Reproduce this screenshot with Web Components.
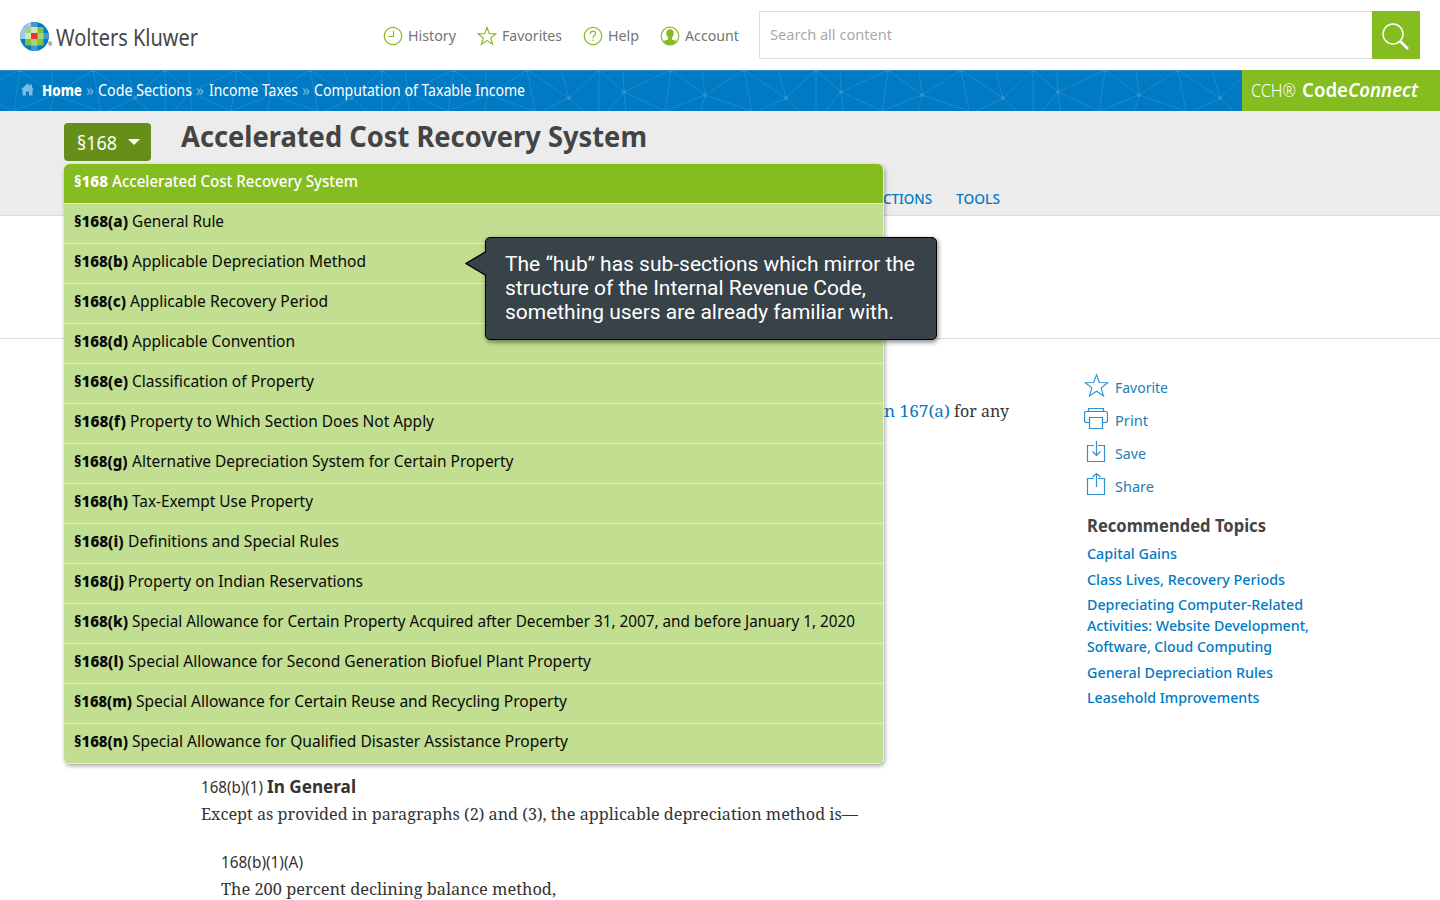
<!DOCTYPE html>
<html lang="en">
<head>
<meta charset="utf-8">
<title>CCH CodeConnect</title>
<style>
html,body{margin:0;padding:0;background:#fff;overflow:hidden;height:900px}
body{font-family:"Noto Sans","Open Sans",sans-serif;font-size:15.5px;color:#333}
</style>
</head>
<body>
<code-page></code-page>
<script>
const make=(name,html,after)=>customElements.define(name,class extends HTMLElement{
  constructor(){super();this.attachShadow({mode:"open"});}
  connectedCallback(){
    this.shadowRoot.innerHTML=typeof html==="function"?html(this):html;
    if(after)after(this);
  }
});

const STAR='<path d="M10 1.4 12.3 7.6 19 7.8 13.7 11.9 15.6 18.3 10 14.6 4.4 18.3 6.3 11.9 1 7.8 7.7 7.6Z"/>';
const ICONS={
  history:['0 0 20 20',20,'<circle cx="10" cy="10" r="8.7"/><path d="M10.5 4.7V10.5H5.5"/>'],
  star:['0 0 20 20',20,STAR],
  help:['0 0 20 20',20,'<circle cx="10" cy="10" r="8.7"/><path d="M7.4 7.7C7.4 4.3 12.7 4.3 12.7 7.5 12.7 9.5 10 9.5 10 12"/><path d="M10 13.4V15"/>'],
  account:['0 0 20 20',20,'<circle cx="10" cy="10" r="8.8"/><path fill="currentColor" stroke="none" d="M10 3.2C12.8 3.2 14 5 13.7 7.8 13.5 9.6 12.8 10.8 12 11.6V13.2C12.6 14.3 15.6 14.3 17 15.4A9 9 0 0 1 3 15.4C4.4 14.3 7.4 14.3 8 13.2V11.6C7.2 10.8 6.5 9.6 6.3 7.8 6 5 7.2 3.2 10 3.2Z"/>'],
  favorite:['0 0 20 20',25,STAR],
  print:['0 0 24 24',24,'<path d="M4.5 4.5V1.5H19.500V4.500M5.500 15.500H2.500Q.5 15.500 .5 13.500V6.500Q.5 4.500 2.500 4.500H21.500Q23.500 4.500 23.500 6.500V13.500Q23.500 15.500 21.500 15.500H18.500M5.500 10.500H18.500V21.500H5.500Z"/>'],
  save:['0 0 24 24',24,'<path d="M10 5.500H3.500V21.500H20.500V5.500H14M12.500 1V15M8.500 11.500 12.500 15.500 16.500 11.500"/>'],
  share:['0 0 24 24',24,'<path d="M10 5.500H3.500V21.500H20.500V5.500H14M12.500 14V0.500M8.500 4 12.500 0.500 16.500 4"/>']
};
make("line-icon",el=>{const[v,s,p]=ICONS[el.getAttribute("name")];return `<style>:host{display:block;width:${s}px;height:${s}px;flex:none}svg{display:block}</style>
<svg width="${s}" height="${s}" viewBox="${v}" fill="none" stroke="currentColor" stroke-width="${s===25?.9:1.2}">${p}</svg>`});

make("brand-logo",`<style>:host{display:flex;align-items:center;width:363px;height:70px;padding-left:20px;box-sizing:border-box;flex:none;color:#474747;font-size:23.200px}
svg{flex:none;margin-top:2px}.r{font-size:5px;margin:18px 3px 0 -1px;width:5px;font-weight:700}fit-text{padding-top:3px}</style>
<svg width="29" height="29" viewBox="0 0 29 29"><defs><clipPath id="c"><circle cx="14.500" cy="14.500" r="14.400"/></clipPath></defs>
<g clip-path="url(#c)"><path fill="#007ac3" d="M0 0H29V29H0Z"/><path fill="#a5c9eb" d="M5 0H11V5H5ZM0 5H5V17H0Z"/><path fill="#409bd2" d="M11 0H17.500V5H11ZM23.500 11H29V17H23.500ZM11 23.500H17.500V29H11Z"/>
<path fill="#7fc241" d="M5 5H23.500V23.500H5Z"/><path fill="#a6d178" d="M5 5H11V11H5ZM17.500 11H23.500V17H17.500ZM11 17H17.500V23.500H11Z"/><path fill="#cfe6b4" d="M11 5H17.500V11H11ZM5 11H11V17H5Z"/><path fill="#ee3338" d="M11 11H17.500V17H11Z"/></g></svg>
<span class="r">®</span><fit-text w="142">Wolters Kluwer</fit-text>`);

make("nav-item",el=>`<style>:host{display:flex;align-items:center;color:#757575;font-size:15px;height:24px}line-icon{color:#85bc20;margin-right:5px}fit-text{margin-top:-1px}</style>
<line-icon name="${el.getAttribute("icon")}"></line-icon><fit-text w="${el.getAttribute("w")}"><slot></slot></fit-text>`);

make("search-box",`<style>:host{display:flex;width:661px;height:48px;flex:none}.f{flex:1;border:1px solid #dcdcdc;border-right:0;display:flex;align-items:center;padding:0 0 2px 10px;color:#a9a9a9;font-size:15px;box-sizing:border-box}.b{width:48px;background:#85bc20;display:flex}</style>
<div class="f"><fit-text w="122">Search all content</fit-text></div>
<div class="b"><svg width="48" height="48" fill="none" stroke="#fff"><circle cx="21" cy="23" r="10" stroke-width="1.500"/><path d="M28.500 30.500 36 38" stroke-width="2.600"/></svg></div>`);

make("site-header",`<style>:host{display:flex;height:70px;align-items:center;background:#fff}nav{display:flex;width:376px;margin-left:20px;padding-top:1px;gap:21px;flex:none}</style>
<brand-logo></brand-logo><nav><nav-item icon="history" w="48">History</nav-item><nav-item icon="star" w="60">Favorites</nav-item><nav-item icon="help" w="31">Help</nav-item><nav-item icon="account" w="54">Account</nav-item></nav><search-box></search-box>`);

make("crumb-bar",`<style>:host{display:grid;grid-template-columns:1242px 198px;height:41px;background:#007ac3;color:#fff}
.l{display:grid}.l>*{grid-area:1/1}.t{display:flex;height:39px;align-items:center;padding-left:21px;gap:4px}.h{margin-right:4px}
b{font-weight:800}.s{color:#7dbbe0}.p{background:#85bc20;display:flex;align-items:center;padding:0 0 1px 9px;gap:6px;font-size:19px;box-sizing:border-box;height:41px}</style>
<div class="l"><svg width="1242" height="41"><defs><pattern id="n" patternUnits="userSpaceOnUse" x="-82" y="0" width="217" height="41">
<g stroke="#258bcb" stroke-width=".8" fill="none"><path d="M0 28 30 0V41M0 28-42 0M0 28-8 0M0 28-27 41M0 28 14 41M30 0 55 22 54 0M55 22 102 0 96 41 55 22 57 41M55 22 39 41M102 0 136 25 133 0M136 25 175 0 183 41 136 25 96 41M136 25 132 41M175 0 217 28 190 41M217 28 209 0M217 28 231 0"/></g>
<g fill="#3090cc"><circle cx="0" cy="28" r="2"/><circle cx="217" cy="28" r="2"/><circle cx="55" cy="22" r="2"/><circle cx="136" cy="25" r="2"/><circle cx="30" cy="0" r="2.200"/><circle cx="102" cy="0" r="2.200"/><circle cx="175" cy="0" r="2.200"/></g></pattern></defs><path fill="url(#n)" d="M0 0H1242V41H0Z"/><path stroke="#2c8dca" d="M0 .5H1242"/></svg>
<div class="t"><svg class="h" width="13" height="13" viewBox="0 0 13 13" fill="#7dbbe0"><path d="M6.500 .5 9 2.800V1.500H11V4.600L13 6.500H11.500V12.500H8V8.500H5V12.500H1.500V6.500H0Z"/></svg>
<fit-text w="40"><b>Home</b></fit-text><fit-text class="s" w="8">»</fit-text><fit-text w="94">Code Sections</fit-text><fit-text class="s" w="8" style="margin-right:1px">»</fit-text><fit-text w="89">Income Taxes</fit-text><fit-text class="s" w="8">»</fit-text><fit-text w="211">Computation of Taxable Income</fit-text></div></div>
<div class="p"><fit-text w="45" style="font-weight:300">CCH®</fit-text><fit-text w="116" style="font-weight:600">Code<i>Connect</i></fit-text></div>`);

make("section-button",`<style>:host{display:flex;width:87px;height:38px;box-sizing:border-box;padding-left:13px;align-items:center;background:#658f18;border-radius:4px;color:#fff;font-size:20px;gap:11px}svg{display:block;margin-top:-1px}</style>
<fit-text w="40"><slot></slot></fit-text><svg width="12" height="6"><path fill="#fff" d="M0 0H12L6 6Z"/></svg>`);

make("title-band",`<style>:host{display:block;height:105px;background:#ececec;border-bottom:1px solid #dcdcdc;box-sizing:border-box;color:#444}
.a{display:flex;padding:12px 0 0 64px;gap:30px;height:52px;box-sizing:border-box}h1{margin:-8px 0 0;font-size:29px;line-height:42px;font-weight:700}
.b{display:flex;padding:23px 0 0 882.500px;gap:24px;color:#007ac3;line-height:24px;font-size:15px;font-weight:500}</style>
<div class="a"><section-button>§168</section-button><h1><fit-text w="466">Accelerated Cost Recovery System</fit-text></h1></div>
<div class="b"><fit-text w="49">CTIONS</fit-text><fit-text w="44">TOOLS</fit-text></div>`);

make("menu-row",el=>`<style>:host{display:flex;height:40px;box-sizing:border-box;border-bottom:1px solid #e3efd0;padding:0 0 6px 10px;align-items:center;gap:4px;background:#c2de91;color:#0a0a0a;font-weight:450}
:host([on]){background:#85bc20;color:#fff;font-weight:500}b{font-weight:800}</style>
<fit-text w="${el.getAttribute("a")}"><b>§168${el.getAttribute("k")}</b></fit-text><fit-text w="${el.getAttribute("b")}"><slot></slot></fit-text>`);

const ROWS=[["",34,246,"Accelerated Cost Recovery System"],["(a)",54,92,"General Rule"],["(b)",54,234,"Applicable Depreciation Method"],["(c)",52,198,"Applicable Recovery Period"],["(d)",54,163,"Applicable Convention"],["(e)",54,182,"Classification of Property"],["(f)",52,304,"Property to Which Section Does Not Apply"],["(g)",53.500,381.500,"Alternative Depreciation System for Certain Property"],["(h)",54,181,"Tax-Exempt Use Property"],["(i)",49.500,211,"Definitions and Special Rules"],["(j)",50,235,"Property on Indian Reservations"],["(k)",54,723,"Special Allowance for Certain Property Acquired after December 31, 2007, and before January 1, 2020"],["(l)",49.500,463,"Special Allowance for Second Generation Biofuel Plant Property"],["(m)",58,431,"Special Allowance for Certain Reuse and Recycling Property"],["(n)",54,436,"Special Allowance for Qualified Disaster Assistance Property"]];
make("section-menu",`<style>:host{display:block;width:820px;box-sizing:border-box;border-radius:6px;overflow:hidden;border-right:1px solid #e3efd0;box-shadow:1px 2px 4px rgba(0,0,0,.35)}</style>`+ROWS.map(([k,a,b,t],i)=>`<menu-row k="${k}" a="${a}" b="${b}"${i?"":" on"}>${t}</menu-row>`).join(""));

make("hub-tip",`<style>:host{display:block;width:452px;height:103px;box-sizing:border-box;background:#384249;border:1px solid #000;border-radius:5px;box-shadow:1px 2px 5px rgba(0,0,0,.5);padding:14px 0 0 19px;color:#fff;font:400 20px/24px Roboto,sans-serif}
svg{position:absolute;left:-21px;top:12px}fit-text{display:block}</style>
<svg width="22" height="27"><path fill="#384249" d="M22 1 1 13.500 22 26Z"/><path fill="none" stroke="#000" stroke-width="1.300" d="M21 1.500 1 13.500 21 25.500"/></svg>
<fit-text w="410">The “hub” has sub-sections which mirror the</fit-text><fit-text w="361">structure of the Internal Revenue Code,</fit-text><fit-text w="389">something users are already familiar with.</fit-text>`);

make("tool-link",el=>`<style>:host{display:flex;height:33px;align-items:center;color:#1b7db8;font-size:15px;font-weight:400}.i{width:31px;color:#2b91d0;flex:none}fit-text{padding-top:2px}</style>
<div class="i"><line-icon name="${el.getAttribute("icon")}"></line-icon></div><fit-text w="${el.getAttribute("w")}"><slot></slot></fit-text>`);

make("side-panel",`<style>:host{display:block;padding:30px 0 0 1px;color:#007ac3;font-size:14.600px;font-weight:500}
h2{margin:7px 0 1px 3px;color:#444;font-size:17.500px;line-height:34px;font-weight:700}
.l{display:block;margin-left:3px;line-height:21px;padding-bottom:4.600px}.l fit-text{display:block}</style>
<tool-link icon="favorite" w="53">Favorite</tool-link><tool-link icon="print" w="33">Print</tool-link><tool-link icon="save" w="31">Save</tool-link><tool-link icon="share" w="39">Share</tool-link>
<h2><fit-text w="179">Recommended Topics</fit-text></h2>
<div class="l"><fit-text w="90">Capital Gains</fit-text></div><div class="l"><fit-text w="198">Class Lives, Recovery Periods</fit-text></div>
<div class="l"><fit-text w="216">Depreciating Computer-Related</fit-text><fit-text w="222">Activities: Website Development,</fit-text><fit-text w="185">Software, Cloud Computing</fit-text></div>
<div class="l"><fit-text w="186">General Depreciation Rules</fit-text></div><div class="l"><fit-text w="172.500">Leasehold Improvements</fit-text></div>`);

make("code-article",`<style>:host{display:block;color:#333;font-size:15.500px}
.s{font-family:"Noto Serif","DejaVu Serif",serif;font-size:16px}.c{display:flex;gap:4px;padding:61px 0 0 884px;height:24px}.c a{color:#007ac3}
.r{display:flex;gap:4px;line-height:24px;padding-left:201px;height:24px}.r b{font-size:18px;font-weight:700}.n{padding-left:221px}</style>
<div class="c s"><a><fit-text w="66">n 167(a)</fit-text></a><fit-text w="55">for any</fit-text></div>
<div class="r" style="margin-top:350px"><fit-text w="62" style="padding-top:1px">168(b)(1)</fit-text><b><fit-text w="89">In General</fit-text></b></div>
<div class="r s" style="margin-top:4px"><fit-text w="657">Except as provided in paragraphs (2) and (3), the applicable depreciation method is—</fit-text></div>
<div class="r n" style="margin-top:24px"><fit-text w="82">168(b)(1)(A)</fit-text></div>
<div class="r n s" style="margin-top:3px"><fit-text w="335">The 200 percent declining balance method,</fit-text></div>`);

make("code-page",`<style>:host{display:block;width:1440px;height:900px;position:relative;overflow:hidden;background:#fff}
.g{height:122px;border-bottom:1px solid #dcdcdc}.m{display:grid;grid-template-columns:1083px 357px}
section-menu{position:absolute;left:64px;top:164px}hub-tip{position:absolute;left:485px;top:237px}</style>
<site-header></site-header><crumb-bar></crumb-bar><title-band></title-band><div class="g"></div>
<div class="m"><code-article></code-article><side-panel></side-panel></div>
<section-menu></section-menu><hub-tip></hub-tip>`);

/* Sets a line of text to the measure given in its w attribute. */
make("fit-text",`<style>:host{display:inline-block;white-space:nowrap;flex:none}span{display:inline-block;transform-origin:0 50%}</style><span><slot></slot></span>`,el=>{
  const s=el.shadowRoot.querySelector("span"),w=+el.getAttribute("w"),n=s.getBoundingClientRect().width;
  el.style.width=w+"px";
  if(n)s.style.transform=`scaleX(${w/n})`;
});
</script>
</body>
</html>
